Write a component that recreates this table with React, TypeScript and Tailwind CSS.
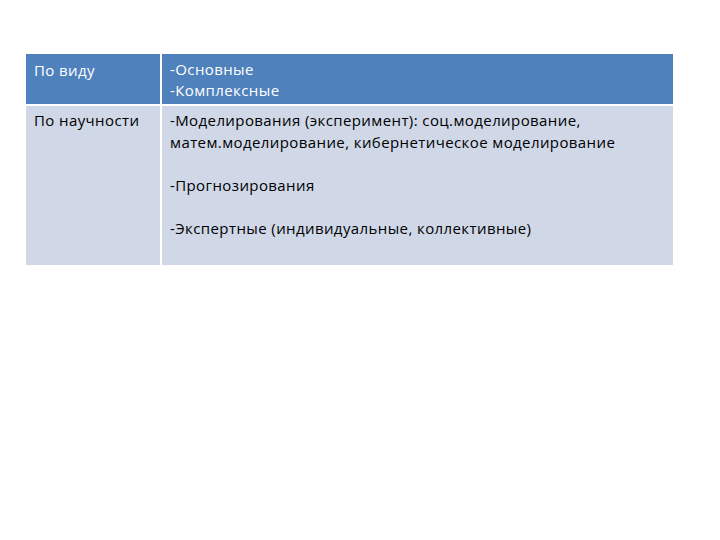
const rows = [
  { label: "По научности", lines: [] as string[] },
]

export default function App() {
  return (
    <div className="h-[540px] w-[720px] bg-white pl-[26px] pt-[54px] font-['Open_Sans',sans-serif] text-[15px] tracking-[0.4px]">
      <div className="grid w-[647px] grid-cols-[134px_1fr] gap-[2px] bg-white">
        <div className="bg-[#4f81bd] px-[8px] pt-[6px] pb-[6px] leading-[21px] text-white">
          По виду
        </div>
        <div className="bg-[#4f81bd] px-[8px] pt-[5px] pb-[3px] leading-[21px] text-white">
          <div>-Основные</div>
          <div>-Комплексные</div>
        </div>
        <div className="h-[159px] bg-[#d0d8e8] px-[8px] pt-[4px] leading-[21.5px] text-black">
          {rows[0].label}
        </div>
        <div className="h-[159px] bg-[#d0d8e8] px-[8px] pt-[4px] leading-[21.5px] text-black">
          <p>-Моделирования (эксперимент): соц.моделирование,</p>
          <p>матем.моделирование, кибернетическое моделирование</p>
          <p className="mt-[21.5px]">-Прогнозирования</p>
          <p className="mt-[21.5px]">-Экспертные (индивидуальные, коллективные)</p>
        </div>
      </div>
    </div>
  )
}
